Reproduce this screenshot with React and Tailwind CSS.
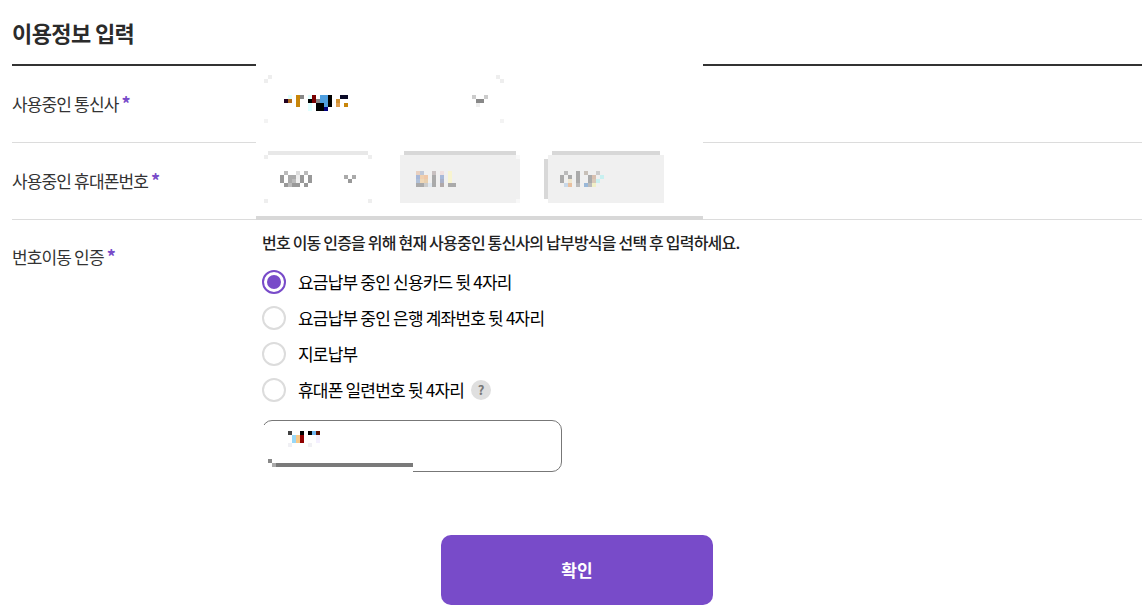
const FONT = "font-['Noto_Sans_CJK_KR','Noto_Sans',sans-serif]";

// blurred-out leftovers of the masked fields, [x, y, color, width, height]
const carrierPixels = [
  [288, 95, "#e0ffff"], [296, 95, "#c8860a"], [300, 95, "#888888"], [308, 95, "#e0ffff"], [312, 95, "#7a0000"],
  [320, 95, "#4f9fe0", 8], [328, 95, "#000000"], [340, 95, "#0a0a28", 8],
  [284, 99, "#200020"], [288, 99, "#b06a20"], [296, 99, "#c8860a"], [308, 99, "#000000"], [312, 99, "#7a0000"],
  [316, 99, "#888888"], [320, 99, "#4f9fe0", 8], [328, 99, "#000000"], [336, 99, "#d09030"],
  [296, 103, "#c8860a"], [308, 103, "#e0ffff"], [316, 103, "#000000", 8], [324, 103, "#4f9fe0"], [328, 103, "#000000"],
  [336, 103, "#e0a050"], [344, 103, "#c8860a"],
  [308, 107, "#e0ffff"], [316, 107, "#000000", 8], [324, 107, "#000080"],
  [472, 95, "#cccccc"], [484, 95, "#cccccc"], [476, 99, "#888888", 8], [476, 103, "#eeeeee"],
  [268, 75, "#eeeeee"], [264, 79, "#eeeeee"], [496, 75, "#eeeeee"], [500, 79, "#eeeeee"],
  [264, 119, "#f3f3f3"], [500, 119, "#f3f3f3"],
];

const prefixPixels = [
  [268, 151, "#e8e8e8", 100], [264, 155, "#eeeeee"], [368, 155, "#eeeeee"], [264, 199, "#eeeeee"], [368, 199, "#eeeeee"],
  [284, 171, "#bbbbbb"], [296, 171, "#dddddd"], [304, 171, "#bbbbbb"],
  [280, 175, "#999999"], [288, 175, "#aaaaaa"], [292, 175, "#aaaaaa"], [296, 175, "#eeeeee"], [300, 175, "#999999"], [308, 175, "#999999"],
  [280, 179, "#999999"], [288, 179, "#aaaaaa"], [292, 179, "#bbbbbb"], [296, 179, "#f0f0f0"], [300, 179, "#999999"], [308, 179, "#999999"],
  [284, 183, "#999999"], [288, 183, "#bbbbbb"], [292, 183, "#999999"], [296, 183, "#999999"], [304, 183, "#999999"],
  [344, 175, "#aaaaaa"], [352, 175, "#aaaaaa"], [348, 179, "#999999"],
];

const middlePixels = [
  [516, 155, "#f8f8f8"], [516, 199, "#f8f8f8"],
  [416, 171, "#e8d0c0"], [420, 171, "#c0c8d8"], [432, 171, "#c8c0c0"], [440, 171, "#f0e0e0"], [448, 171, "#f8f4d0"],
  [416, 175, "#a8b8d8"], [420, 175, "#f0d0b0"], [424, 175, "#f0c8a8"], [432, 175, "#aaaaaa"], [440, 175, "#a8b8d8"], [448, 175, "#f8f4d0"],
  [416, 179, "#b0c0d8"], [420, 179, "#f0d8b8"], [424, 179, "#e8d0b0"], [432, 179, "#aaaaaa"], [440, 179, "#a8b0c8"], [448, 179, "#f8f4d0"],
  [416, 183, "#aaaaaa", 8], [424, 183, "#cccccc"], [428, 183, "#e0e8f0"], [432, 183, "#aaaaaa"], [440, 183, "#b0a8a8"], [448, 183, "#aaaaaa", 8],
];

const lastPixels = [
  [564, 171, "#bbbbbb"], [576, 171, "#aaaaaa"], [584, 171, "#c8c0b8"], [596, 171, "#cccccc"],
  [560, 175, "#aaaaaa"], [568, 175, "#aaaaaa"], [576, 175, "#aaaaaa"], [588, 175, "#aaaaaa"], [592, 175, "#d8c0b0"], [600, 175, "#c8f0f0"],
  [560, 179, "#aaaaaa"], [568, 179, "#f0e8d0"], [576, 179, "#aaaaaa"], [588, 179, "#aaaaaa"], [592, 179, "#d8c8b8"], [596, 179, "#c8f0f0"],
  [564, 183, "#c8d8e8"], [568, 183, "#e8c0a0"], [576, 183, "#bbbbbb"], [584, 183, "#9ab8d8"], [588, 183, "#bbbbbb"], [592, 183, "#f0f0c8"],
];

const inputPixels = [
  [288, 431, "#444444"], [300, 431, "#000000"], [308, 431, "#000000"], [312, 431, "#70b8f0"], [316, 431, "#5a1000"],
  [292, 435, "#98d8f8", 4, 8], [296, 435, "#f8c888", 4, 8], [300, 435, "#900000", 4, 8], [316, 435, "#f4f0ff", 4, 8],
  [288, 443, "#f0f0f4"], [308, 443, "#f0f0f4"],
];

function Pixels({ x, y, w, h, items }) {
  return (
    <svg width={w} height={h} viewBox={`${x} ${y} ${w} ${h}`} shapeRendering="crispEdges" className="block">
      {items.map(([px, py, color, pw = 4, ph = 4], i) => (
        <rect key={i} x={px} y={py} width={pw} height={ph} fill={color} />
      ))}
    </svg>
  );
}

function Label({ children }) {
  return (
    <span className="text-[17px] leading-[22px] tracking-[-0.85px] text-[#333333]">
      {children} <b className="text-[18px] font-bold text-[#784bc9]">*</b>
    </span>
  );
}

function Radio({ checked, label, help }) {
  return (
    <div className="flex h-9 items-center">
      {checked ? (
        <span className="flex size-6 items-center justify-center rounded-full border-2 border-[#784bc9]">
          <span className="size-3.5 rounded-full bg-[#784bc9]" />
        </span>
      ) : (
        <span className="size-6 rounded-full border-2 border-[#dcdcdc]" />
      )}
      <span className="ml-3 text-[17px] tracking-[-0.8px] text-black">{label}</span>
      {help && (
        <span className="ml-[7px] flex size-[20px] items-center justify-center rounded-full bg-[#dfdfdf] text-[13px] font-bold text-[#777777]">
          ?
        </span>
      )}
    </div>
  );
}

export default function App() {
  return (
    <div className={`h-[611px] overflow-hidden bg-white pl-3 pr-1.5 ${FONT}`}>
      <h2 className="flex h-[52px] items-end pb-1.5 text-[22px] font-bold leading-[28px] tracking-[-0.6px] text-[#2b2b2b]">
        이용정보 입력
      </h2>
      <div className="mt-3 flex h-0.5">
        <div className="w-[244px] bg-[#333333]" />
        <div className="w-[447px]" />
        <div className="flex-1 bg-[#333333]" />
      </div>

      <div className="flex h-[77px]">
        <div className="flex w-[244px] items-center border-b border-[#dcdcdc] pb-px">
          <Label>사용중인 통신사</Label>
        </div>
        <div className="w-[447px]">
          <Pixels x={256} y={66} w={447} h={77} items={carrierPixels} />
        </div>
        <div className="flex-1 border-b border-[#dcdcdc]" />
      </div>

      <div className="flex h-[77px]">
        <div className="flex w-[244px] items-center border-b border-[#dcdcdc] pb-0.5">
          <Label>사용중인 휴대폰번호</Label>
        </div>
        <div className="flex w-[447px] border-b-4 border-[#d8d8d8] pl-2 pt-2">
          <Pixels x={264} y={151} w={108} h={52} items={prefixPixels} />
          <div className="ml-7 flex h-[52px] w-[120px] flex-col">
            <div className="mx-1 h-1 bg-[#d8d8d8]" />
            <div className="flex-1 bg-[#f0f0f0]">
              <Pixels x={400} y={155} w={120} h={48} items={middlePixels} />
            </div>
          </div>
          <div className="ml-6 flex h-[52px] w-[120px]">
            <div className="mb-1 mt-2 w-1 bg-[#d8d8d8]" />
            <div className="flex flex-1 flex-col">
              <div className="mx-1 h-1 bg-[#d8d8d8]" />
              <div className="flex-1 bg-[#f0f0f0]">
                <Pixels x={548} y={155} w={116} h={48} items={lastPixels} />
              </div>
            </div>
          </div>
        </div>
        <div className="flex-1 border-b border-[#dcdcdc]" />
      </div>

      <div className="flex h-[264px]">
        <div className="w-[250px] pt-[25px]">
          <Label>번호이동 인증</Label>
        </div>
        <div className="pt-3">
          <p className="text-[16px] font-medium leading-5 tracking-[-0.8px] text-[#222222]">
            번호 이동 인증을 위해 현재 사용중인 통신사의 납부방식을 선택 후 입력하세요.
          </p>
          <div className="mt-3">
            <Radio checked label="요금납부 중인 신용카드 뒷 4자리" />
            <Radio label="요금납부 중인 은행 계좌번호 뒷 4자리" />
            <Radio label="지로납부" />
            <Radio help label="휴대폰 일련번호 뒷 4자리" />
          </div>
          <div className="relative mt-3 h-[52px] w-[300px] rounded-[10px] border border-[#777777]">
            {/* masked part of the input */}
            <div className="absolute left-[-1px] top-[4px] h-[43px] w-[6px] bg-white" />
            <div className="absolute left-[-50px] top-[46px] h-[20px] w-[200px] bg-white" />
            <div className="absolute left-[13px] top-[42px] h-1 w-[137px] bg-[#7a7a7a]" />
            <div className="absolute left-[9px] top-[42px] h-1 w-1 bg-[#aaaaaa]" />
            <div className="absolute left-[5px] top-[38px] h-1 w-1 bg-[#888888]" />
            <div className="absolute left-[-1px] top-[-1px]">
              <Pixels x={262} y={420} w={80} h={30} items={inputPixels} />
            </div>
          </div>
        </div>
      </div>

      <div className="flex justify-center">
        <button className="mt-[51px] h-[70px] w-[272px] rounded-[10px] bg-[#784bc9] text-[17px] font-bold text-white">
          확인
        </button>
      </div>
    </div>
  );
}
